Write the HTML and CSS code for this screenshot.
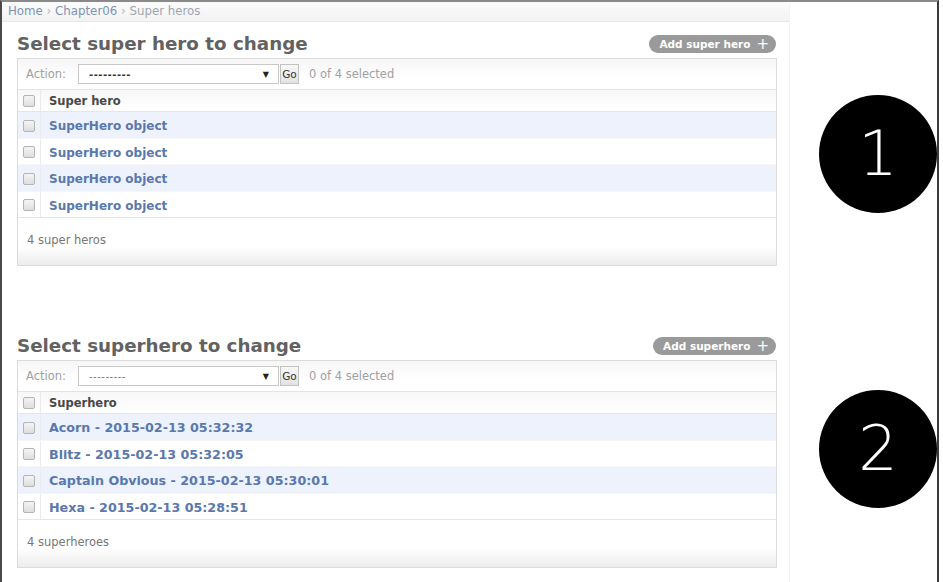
FILE: index.html
```html
<!DOCTYPE html>
<html>
<head>
<meta charset="utf-8">
<link rel="stylesheet" href="styles.css">
</head>
<body>
<div class="frame">
  <div class="admin">
    <div class="breadcrumbs"><a href="#">Home</a> <span class="sep">›</span> <a href="#">Chapter06</a> <span class="sep">›</span> Super heros</div>
    <div class="content">
      <section class="changelist first">
        <div class="head">
          <h1>Select super hero to change</h1>
          <a class="addlink" href="#">Add super hero <span class="plus">+</span></a>
        </div>
        <div class="module">
          <div class="actions">
            <span class="label">Action:</span>
            <span class="select"><span class="dashes">---------</span><span class="arrow">▼</span></span>
            <span class="go">Go</span>
            <span class="counter">0 of 4 selected</span>
          </div>
          <table class="results">
            <thead><tr><th class="cb"><span class="box"></span></th><th class="name">Super hero</th></tr></thead>
            <tbody>
              <tr class="alt"><td class="cb"><span class="box"></span></td><td class="name"><a href="#">SuperHero object</a></td></tr>
              <tr><td class="cb"><span class="box"></span></td><td class="name"><a href="#">SuperHero object</a></td></tr>
              <tr class="alt"><td class="cb"><span class="box"></span></td><td class="name"><a href="#">SuperHero object</a></td></tr>
              <tr><td class="cb"><span class="box"></span></td><td class="name"><a href="#">SuperHero object</a></td></tr>
            </tbody>
          </table>
          <p class="paginator">4 super heros</p>
        </div>
      </section>
      <section class="changelist second">
        <div class="head">
          <h1>Select superhero to change</h1>
          <a class="addlink" href="#">Add superhero <span class="plus">+</span></a>
        </div>
        <div class="module">
          <div class="actions">
            <span class="label">Action:</span>
            <span class="select"><span class="dashes light">---------</span><span class="arrow">▼</span></span>
            <span class="go">Go</span>
            <span class="counter">0 of 4 selected</span>
          </div>
          <table class="results">
            <thead><tr><th class="cb"><span class="box"></span></th><th class="name">Superhero</th></tr></thead>
            <tbody>
              <tr class="alt"><td class="cb"><span class="box"></span></td><td class="name"><a href="#">Acorn - 2015-02-13 05:32:32</a></td></tr>
              <tr><td class="cb"><span class="box"></span></td><td class="name"><a href="#">Blitz - 2015-02-13 05:32:05</a></td></tr>
              <tr class="alt"><td class="cb"><span class="box"></span></td><td class="name"><a href="#">Captain Obvious - 2015-02-13 05:30:01</a></td></tr>
              <tr><td class="cb"><span class="box"></span></td><td class="name"><a href="#">Hexa - 2015-02-13 05:28:51</a></td></tr>
            </tbody>
          </table>
          <p class="paginator">4 superheroes</p>
        </div>
      </section>
    </div>
  </div>
  <div class="markers">
    <div class="marker m1">1</div>
    <div class="marker m2">2</div>
  </div>
</div>
</body>
</html>
```

FILE: styles.css
```css
html, body {
  margin: 0;
  padding: 0;
  background: #fff;
}
body {
  font-family: "DejaVu Sans", Verdana, sans-serif;
  color: #333;
}
.frame {
  display: flex;
  width: 935px;
  height: 580px;
  border-top: 2px solid #8a8a8a;
  border-left: 2px solid #4a4a4a;
  border-right: 2px solid #3a3a3a;
  overflow: hidden;
}
.admin {
  width: 787px;
  border-right: 1px solid #f3f3f3;
  flex: none;
}
.breadcrumbs {
  height: 19px;
  line-height: 18px;
  padding: 0 6px;
  font-size: 11.8px;
  color: #a0a6b0;
  background: linear-gradient(#fbfbfb, #f3f3f3);
  border-bottom: 1px solid #e8e8e8;
}
.breadcrumbs a {
  color: #7d93b6;
  text-decoration: none;
}
.breadcrumbs .sep {
  color: #b5b5b5;
}
.content {
  padding: 0 12px 0 15px;
}
.head {
  display: flex;
  justify-content: space-between;
  align-items: center;
  height: 26px;
  margin: 9px 0 1px;
}
.second .head {
  margin-top: 67px;
}
h1 {
  margin: 0;
  font-size: 18.3px;
  line-height: 26px;
  font-weight: bold;
  color: #626262;
}
.addlink {
  display: flex;
  align-items: center;
  height: 18px;
  padding: 0 7px 0 10px;
  margin-right: 1px;
  border-radius: 9px;
  background: #9a9a9a;
  color: #fff;
  font-size: 10.5px;
  font-weight: bold;
  text-decoration: none;
}
.addlink .plus {
  margin-left: 6px;
  font-size: 15px;
  font-weight: normal;
  line-height: 18px;
}
.module {
  border: 1px solid #dcdcdc;
  background: #fff;
}
.actions {
  display: flex;
  align-items: center;
  height: 30px;
  padding: 0 8px;
  background: linear-gradient(#f6f6f6, #fff 60%);
  border-bottom: 1px solid #e4e4e4;
  font-size: 11.5px;
  color: #a0a0a0;
}
.actions .label {
  width: 52px;
}
.select {
  display: flex;
  align-items: center;
  justify-content: space-between;
  box-sizing: border-box;
  width: 201px;
  height: 20px;
  padding: 0 9px 0 10px;
  border: 1px solid #c8c8c8;
  background: #fff;
  color: #333;
}
.dashes {
  font-weight: bold;
  letter-spacing: 0.5px;
  font-size: 10px;
}
.dashes.light {
  font-weight: normal;
  color: #777;
}
.arrow {
  font-size: 8px;
  color: #222;
}
.go {
  box-sizing: border-box;
  width: 19px;
  height: 20px;
  margin-left: 1px;
  line-height: 18px;
  text-align: center;
  border: 1px solid #c2c2c2;
  background: linear-gradient(#f8f8f8, #e2e2e2);
  color: #333;
  font-size: 10.5px;
}
.counter {
  margin-left: 10px;
}
.results {
  width: 100%;
  border-collapse: collapse;
}
.results th, .results td {
  padding: 0;
  text-align: left;
}
.results thead th {
  height: 21px;
  background: linear-gradient(#f7f7f7, #fff);
  border-bottom: 1px solid #e6e6e6;
  font-size: 11.5px;
  font-weight: bold;
  color: #484848;
}
.results .cb {
  width: 22px;
  border-right: 1px solid #ebebeb;
  text-align: center;
}
.results .name {
  padding-left: 8px;
}
.results tbody tr {
  height: 26.5px;
}
.results tbody tr.alt {
  background: #edf2fd;
}
.results tbody td {
  border-bottom: 1px solid #f6f6f6;
}
.results tbody tr:last-child td {
  border-bottom: 1px solid #e6e6e6;
}
.results td.name a {
  color: #5a78ad;
  font-size: 12px;
  font-weight: bold;
  text-decoration: none;
}
.second .results td.name a {
  font-size: 12.7px;
}
.box {
  display: inline-block;
  box-sizing: border-box;
  width: 12px;
  height: 12px;
  vertical-align: middle;
  border: 1px solid #b4b4b4;
  border-radius: 2px;
  background: linear-gradient(#f4f4f4, #dedede);
}
.paginator {
  margin: 0;
  height: 47px;
  line-height: 45px;
  padding: 0 9px;
  font-size: 11.5px;
  color: #777;
  background: linear-gradient(#fff 60%, #ececec);
}
.markers {
  display: flex;
  flex-direction: column;
  padding-left: 29px;
}
.marker {
  width: 118px;
  height: 118px;
  border-radius: 50%;
  background: #000;
  color: #fff;
  display: flex;
  align-items: center;
  justify-content: center;
  font-family: "DejaVu Sans", sans-serif;
  font-weight: 200;
  font-size: 62px;
  line-height: 1;
}
.m1 {
  margin-top: 93px;
}
.m2 {
  margin-top: 177px;
}
```
